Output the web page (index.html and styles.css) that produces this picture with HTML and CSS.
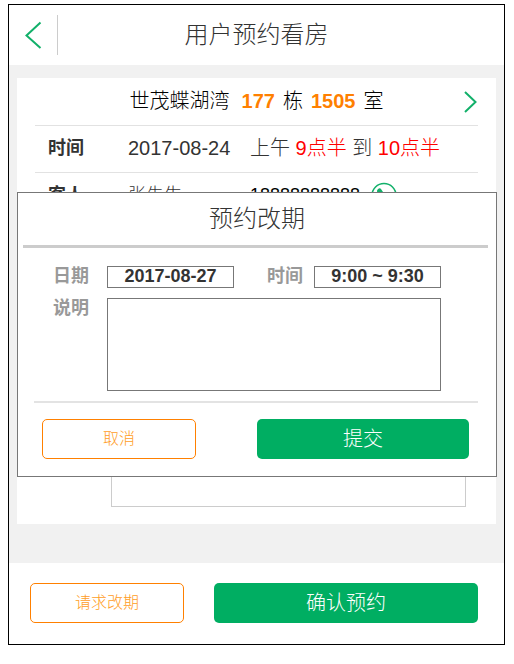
FILE: index.html
```html
<!DOCTYPE html>
<html lang="zh-CN">
<head>
<meta charset="utf-8">
<meta name="viewport" content="width=device-width, initial-scale=1">
<title>用户预约看房</title>
<link rel="stylesheet" href="styles.css">
</head>
<body>
<div class="screen">
  <header class="topbar">
    <a class="back" href="#" aria-label="返回">
      <svg width="18" height="28" viewBox="0 0 18 28" fill="none" stroke="currentColor" stroke-width="2"><path d="M16.500 1.500 2.500 14.500l14 12.500"/></svg>
    </a>
    <h1 class="title">用户预约看房</h1>
  </header>

  <main class="content">
    <section class="card">
      <a class="row house" href="#">
        <span class="house-name"><span class="estate">世茂蝶湖湾</span><b>177</b><span>栋</span><b>1505</b><span>室</span></span>
        <svg class="chevron" width="14" height="24" viewBox="0 0 14 24" fill="none" stroke="currentColor" stroke-width="2"><path d="m1 3 10.500 10L1 23"/></svg>
      </a>
      <div class="row">
        <span class="name">时间</span>
        <span class="first">2017-08-24</span>
        <span>上午 <em>9点半</em> 到 <em>10点半</em></span>
      </div>
      <div class="row">
        <span class="name">客人</span>
        <span class="first guest">张先生</span>
        <span class="phone">18888888888</span>
        <a class="call" href="#" aria-label="拨打电话">
          <svg width="26" height="26" viewBox="0 0 26 26"><circle cx="13" cy="13.500" r="12" fill="none" stroke="currentColor" stroke-width="1.500"/><path fill="currentColor" d="M6 9c0-2 3-4 4-2l2 3c0 1-2 2-1 3l3 3c1 1 2-1 3-1l3 2c2 1 0 4-2 4C12 21 6 15 6 9z"/></svg>
        </a>
      </div>
      <div class="note">
        <textarea class="note-box" aria-label="备注"></textarea>
      </div>
    </section>
  </main>

  <footer class="actions bottom">
    <button class="btn outline" type="button">请求改期</button>
    <button class="btn primary" type="button">确认预约</button>
  </footer>

  <form class="dialog" role="dialog" aria-labelledby="dialog-title">
    <h2 class="title dialog-title" id="dialog-title">预约改期</h2>
    <div class="fields">
      <label for="date">日期</label>
      <input id="date" type="text" value="2017-08-27">
      <label class="second" for="time">时间</label>
      <input id="time" type="text" value="9:00 ~ 9:30">
      <label for="desc">说明</label>
      <textarea id="desc"></textarea>
    </div>
    <div class="actions dialog-actions">
      <button class="btn outline" type="button">取消</button>
      <button class="btn primary" type="submit">提交</button>
    </div>
  </form>
</div>
</body>
</html>
```
FILE: styles.css
```css
* { box-sizing: border-box; }

body {
  margin: 4px 9px 0 8px;
  background: #fff;
  color: #333;
  font: 300 20px/24px "Liberation Sans", "Noto Sans CJK SC", sans-serif;
}

a { color: inherit; text-decoration: none; }

input, textarea, button { font-family: inherit; margin: 0; }

.screen {
  position: relative;
  border: 1px solid #000;
  background: #f1f1f1;
}

.topbar {
  display: grid;
  grid-template-columns: 49px 1fr 49px;
  align-items: center;
  height: 60px;
  background: #fff;
}

.back {
  display: flex;
  align-items: center;
  height: 40px;
  padding-left: 15px;
  border-right: 1px solid #ccc;
  color: #12b06a;
}

.title {
  margin: 0;
  font-size: 24px;
  font-weight: 300;
  line-height: 32px;
  text-align: center;
}

.content { padding: 13px 8px 39px; }

.card {
  padding: 0 18px 17px;
  background: #fff;
}

.row {
  display: flex;
  align-items: center;
  height: 47px;
  padding: 0 0 2px 13px;
  border-bottom: 1px solid #e2e2e2;
}

.row em { color: #f00; font-style: normal; }

.house {
  display: grid;
  grid-template-columns: 1fr auto 1fr;
  height: 48px;
  padding-left: 0;
  color: #000;
}

.house-name {
  display: flex;
  grid-column: 2;
  gap: 8px;
}

.estate { margin-right: 4px; }

.house b { color: #ff8000; font-weight: 700; }

.chevron { justify-self: end; color: #12b06a; }

.name {
  width: 80px;
  font-size: 18px;
  font-weight: 700;
}

.first { width: 122px; }

.guest, .phone { font-size: 18px; }

.phone { color: #000; }

.call { display: flex; margin-left: 11px; color: #12b06a; }

.note { padding: 20px 12px 0 76px; }

.note-box {
  display: block;
  width: 100%;
  height: 267px;
  border: 1px solid #ccc;
  resize: none;
}

.actions { display: flex; }

.btn {
  height: 40px;
  padding: 0 0 4px;
  border: 0;
  border-radius: 5px;
  font-weight: 300;
}

.outline {
  flex: 0 1 154px;
  border: 1px solid #ff8000;
  background: #fff;
  color: #ff9d1e;
  font-size: 16px;
}

.primary {
  flex: 1;
  background: #00ae62;
  color: #fff;
  font-size: 20px;
}

.bottom {
  gap: 30px;
  padding: 20px 26px 21px 21px;
  background: #fff;
}

.dialog {
  position: absolute;
  top: 187px;
  left: 8px;
  right: 7px;
  border: 1px solid #777;
  background: #fff;
}

.dialog-title {
  margin: 0 8px 0 5px;
  padding: 10px 0 10px 3px;
  border-bottom: 3px solid #ccc;
}

.fields {
  display: grid;
  grid-template-columns: 54px 1fr 80px 1fr;
  row-gap: 10px;
  margin: 0 18px 0 16px;
  padding: 18px 37px 10px 19px;
  border-bottom: 2px solid #e3e3e3;
}

.fields label {
  color: #999;
  font-size: 18px;
  font-weight: 700;
  line-height: 20px;
}

.fields .second { padding-left: 33px; }

.fields input {
  width: 100%;
  min-width: 0;
  height: 22px;
  padding: 0 0 2px;
  border: 1px solid #777;
  color: #333;
  font-size: 18px;
  font-weight: 700;
  line-height: 18px;
  text-align: center;
}

.fields textarea {
  grid-column: 2 / -1;
  width: 100%;
  height: 93px;
  border: 1px solid #777;
  resize: none;
}

.dialog-actions {
  gap: 61px;
  padding: 16px 27px 17px 24px;
}
```
